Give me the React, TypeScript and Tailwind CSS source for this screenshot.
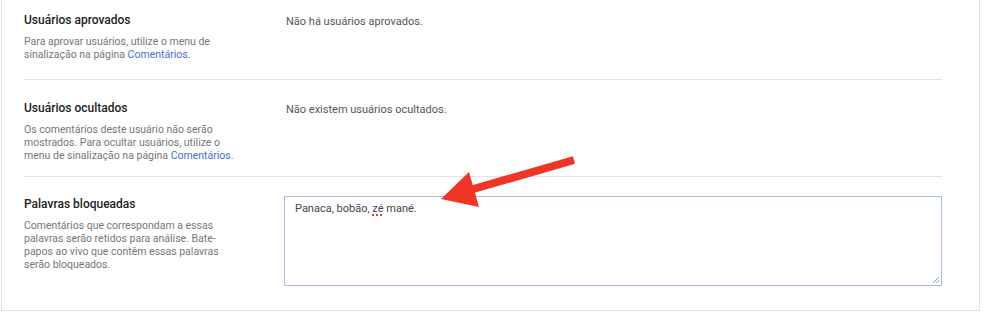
import React from "react";

type Row = {
  title: string;
  desc: React.ReactNode;
  right: React.ReactNode;
};

function Link({ children }: { children: React.ReactNode }) {
  return <a className="text-[#3d6fd1]">{children}</a>;
}

function SettingRow({ title, desc, right, first, last }: Row & { first?: boolean; last?: boolean }) {
  return (
    <div
      className={[
        "flex",
        first ? "pt-[12px] pb-[18px]" : "",
        !first && !last ? "pt-5 pb-[14px]" : "",
        last ? "pt-[19px] pb-6" : "border-b border-[#e3e3e3]",
      ].join(" ")}
    >
      <div className="w-[260px] shrink-0">
        <div className="text-[12px] leading-[16px] font-medium text-[#222]">{title}</div>
        <div className="mt-[7px] w-[214px] text-[10.5px] leading-[13px] text-[#767676]">{desc}</div>
      </div>
      <div className="flex-1 min-w-0">{right}</div>
    </div>
  );
}

function ResizeGrip() {
  return (
    <svg className="absolute right-[1px] bottom-[1px]" width="9" height="9" viewBox="0 0 9 9">
      <path d="M8 2 L2 8 M8 5 L5 8" stroke="#9a9a9a" strokeWidth="1" />
    </svg>
  );
}

export default function App() {
  return (
    <div className="relative w-[984px] h-[323px] bg-white" style={{ fontFamily: "Roboto, 'Liberation Sans', sans-serif" }}>
      <div className="ml-[1px] w-[979px] border-x border-b border-[#e1e1e1] pl-[22px] pr-[37px]">
        <SettingRow
          first
          title="Usuários aprovados"
          desc={
            <>
              Para aprovar usuários, utilize o menu de sinalização na página <Link>Comentários</Link>.
            </>
          }
          right={<div className="pt-[2px] pl-[2px] text-[11px] leading-[16px] text-[#555]">Não há usuários aprovados.</div>}
        />
        <SettingRow
          title="Usuários ocultados"
          desc={
            <>
              Os comentários deste usuário não serão mostrados. Para ocultar usuários, utilize o menu de
              sinalização na página <Link>Comentários</Link>.
            </>
          }
          right={<div className="pt-[2px] pl-[2px] text-[11px] leading-[16px] text-[#555]">Não existem usuários ocultados.</div>}
        />
        <SettingRow
          last
          title="Palavras bloqueadas"
          desc={
            <>
              Comentários que correspondam a essas palavras serão retidos para análise. Bate-papos ao vivo que
              contêm essas palavras serão bloqueados.
            </>
          }
          right={
            <div className="relative h-[90px] border border-[#a7bde3] bg-white px-[10px] pt-[5px] text-[11px] leading-[14px] text-[#444]">
              Panaca, bobão,{" "}
              <span className="underline decoration-dotted decoration-[#e53935] decoration-2 underline-offset-2">zé</span>{" "}
              mané.
              <ResizeGrip />
            </div>
          }
        />
      </div>

      {/* red annotation arrow */}
      <svg className="absolute left-0 top-0 pointer-events-none" width="984" height="323">
        <line x1="574" y1="160" x2="470" y2="190" stroke="#ef3526" strokeWidth="8" />
        <polygon points="441,199 469,172 479,207" fill="#ef3526" />
      </svg>
    </div>
  );
}
